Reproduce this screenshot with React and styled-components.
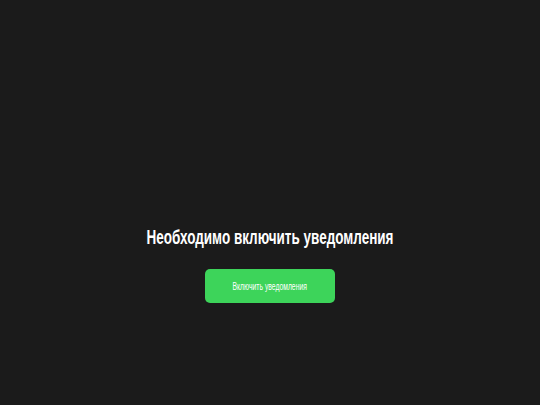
import React from "react";
import styled, { createGlobalStyle } from "styled-components";

const GlobalStyle = createGlobalStyle`
  html, body {
    margin: 0;
    padding: 0;
    background: #1b1b1b;
  }
  body {
    font-family: "Liberation Sans", Arial, sans-serif;
  }
`;

const Page = styled.div`
  width: 100%;
  height: 405px;
  background: #1b1b1b;
  display: flex;
  flex-direction: column;
  align-items: center;
  padding-top: 226px;
  box-sizing: border-box;
`;

// the font in the picture is a condensed grotesque, squeeze the text horizontally
const Narrow = styled.span`
  display: inline-block;
  white-space: nowrap;
  transform: scaleX(${(p) => p.$scale});
`;

const Title = styled.h1`
  margin: 0;
  color: #ffffff;
  font-size: 20px;
  font-weight: 700;
  line-height: 23px;
`;

const EnableButton = styled.button`
  margin-top: 20px;
  width: 130px;
  height: 34px;
  border: none;
  border-radius: 5px;
  background: #3dd45a;
  color: #ffffff;
  font-family: inherit;
  font-size: 10px;
  padding: 0;
  display: flex;
  align-items: center;
  justify-content: center;
  cursor: pointer;
`;

const App = () => {
  return (
    <>
      <GlobalStyle />
      <Page>
        <Title>
          <Narrow $scale={0.675}>Необходимо включить уведомления</Narrow>
        </Title>
        <EnableButton>
          <Narrow $scale={0.68}>Включить уведомления</Narrow>
        </EnableButton>
      </Page>
    </>
  );
};

export default App;
